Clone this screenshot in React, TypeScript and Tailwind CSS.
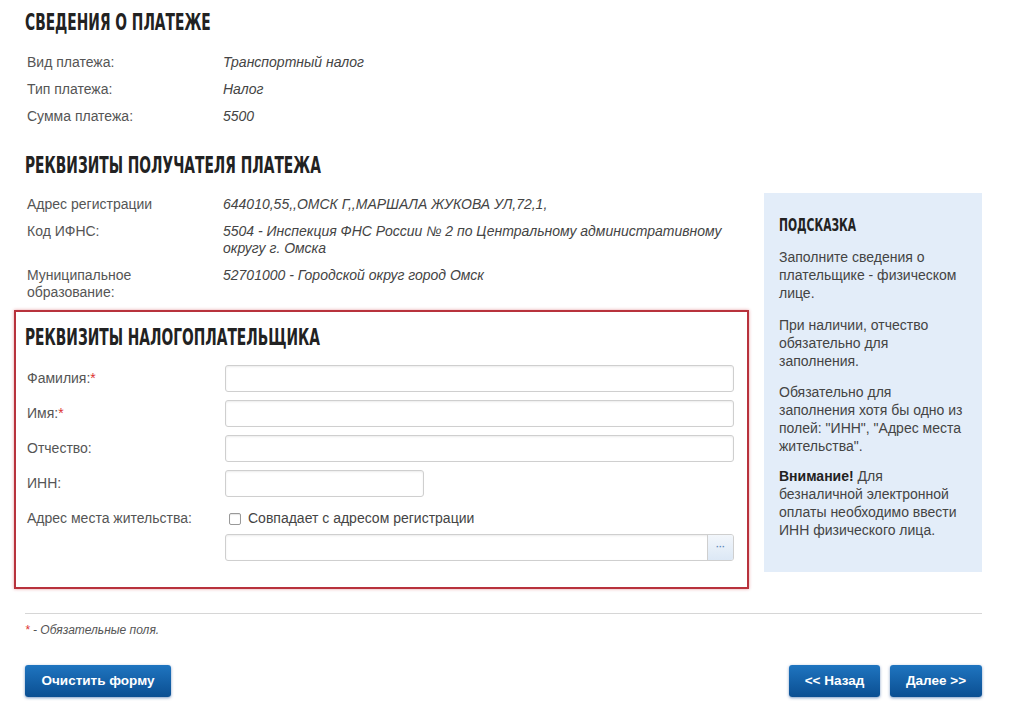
import React from "react";

const body = { fontFamily: '"Liberation Sans", Arial, sans-serif' };
const head = {
  fontFamily: '"DejaVu Sans Condensed", "Liberation Sans Narrow", "Liberation Sans", sans-serif',
};

function Heading({ children, small }: { children: React.ReactNode; small?: boolean }) {
  return (
    <h2
      style={head}
      className={
        small
          ? "origin-left scale-x-[0.7] whitespace-nowrap text-[17px] font-bold leading-none text-[#222]"
          : "origin-left scale-x-[0.667] whitespace-nowrap text-[23px] font-bold leading-none text-[#222]"
      }
    >
      {children}
    </h2>
  );
}

function InfoRow({ label, value }: { label: React.ReactNode; value: React.ReactNode }) {
  return (
    <div className="flex text-[14px] leading-[17px]">
      <div className="w-[198px] shrink-0 pl-[2px] text-[#555]">{label}</div>
      <div className="flex-1 italic text-[#444]">{value}</div>
    </div>
  );
}

function Field({ label, narrow }: { label: React.ReactNode; narrow?: boolean }) {
  return (
    <div className="flex items-center">
      <div className="w-[200px] shrink-0 pl-[2px] text-[14px] text-[#555]">{label}</div>
      <input
        type="text"
        className={
          narrow
            ? "h-[27px] w-[199px] rounded-[3px] border border-[#cfcfcf] bg-white shadow-[inset_0_1px_2px_rgba(0,0,0,0.08)] outline-none"
            : "h-[27px] flex-1 rounded-[3px] border border-[#cfcfcf] bg-white shadow-[inset_0_1px_2px_rgba(0,0,0,0.08)] outline-none"
        }
      />
    </div>
  );
}

function Req() {
  return <span className="text-[#d33]">*</span>;
}

export default function App() {
  return (
    <div style={body} className="h-[711px] w-[1024px] overflow-hidden bg-white pl-[25px] pr-[42px] pt-[11px]">
      <Heading>СВЕДЕНИЯ О ПЛАТЕЖЕ</Heading>
      <div className="mt-[20px] flex flex-col gap-[10px]">
        <InfoRow label="Вид платежа:" value="Транспортный налог" />
        <InfoRow label="Тип платежа:" value="Налог" />
        <InfoRow label="Сумма платежа:" value="5500" />
      </div>

      <div className="mt-[29px]">
        <Heading>РЕКВИЗИТЫ ПОЛУЧАТЕЛЯ ПЛАТЕЖА</Heading>
      </div>

      <div className="mt-[18px] flex gap-[29px]">
        <div className="w-[710px] shrink-0">
          <div className="mt-[1px] flex flex-col gap-[10px]">
            <InfoRow label="Адрес регистрации" value="644010,55,,ОМСК Г,,МАРШАЛА ЖУКОВА УЛ,72,1," />
            <InfoRow
              label="Код ИФНС:"
              value={
                <>
                  5504 - Инспекция ФНС России № 2 по Центральному административному
                  <br />
                  округу г. Омска
                </>
              }
            />
            <InfoRow
              label={
                <>
                  Муниципальное
                  <br />
                  образование:
                </>
              }
              value="52701000 - Городской округ город Омск"
            />
          </div>

          <div className="-ml-[11px] mt-[9px] w-[735px] border-2 border-[#b8323c] px-[9px] pb-[26px] pt-[14px] shadow-[0_0_3px_rgba(200,40,50,0.45)]">
            <Heading>РЕКВИЗИТЫ НАЛОГОПЛАТЕЛЬЩИКА</Heading>
            <div className="mt-[16px] flex flex-col gap-[8px] pr-[4px]">
              <Field label={<>Фамилия:<Req /></>} />
              <Field label={<>Имя:<Req /></>} />
              <Field label="Отчество:" />
              <Field label="ИНН:" narrow />
              <div className="mt-[3px] flex items-center">
                <div className="w-[200px] shrink-0 pl-[2px] text-[14px] text-[#555]">Адрес места жительства:</div>
                <label className="flex items-center gap-[7px] pl-[4px] text-[14px] text-[#444]">
                  <span className="h-[12px] w-[12px] rounded-[2px] border border-[#999] bg-white shadow-[inset_0_1px_1px_rgba(0,0,0,0.1)]" />
                  Совпадает с адресом регистрации
                </label>
              </div>
              <div className="-mt-[3px] flex pl-[200px]">
                <div className="flex h-[27px] flex-1 overflow-hidden rounded-[3px] border border-[#cfcfcf] bg-white shadow-[inset_0_1px_2px_rgba(0,0,0,0.08)]">
                  <div className="flex-1" />
                  <button className="flex w-[26px] items-center justify-center border-l border-[#cfcfcf] bg-gradient-to-b from-[#f2f6fb] to-[#dce8f5] text-[9px] font-bold leading-none text-[#5a86b8]">
                    ···
                  </button>
                </div>
              </div>
            </div>
          </div>
        </div>

        <aside className="mt-[-2px] h-[379px] w-[218px] shrink-0 whitespace-nowrap bg-[#e3edf9] px-[15px] pt-[24px] text-[14px] leading-[18px] text-[#444]">
          <Heading small>ПОДСКАЗКА</Heading>
          <p className="mt-[14px]">
            Заполните сведения о<br />
            плательщике - физическом<br />
            лице.
          </p>
          <p className="mt-[14px]">
            При наличии, отчество<br />
            обязательно для<br />
            заполнения.
          </p>
          <p className="mt-[13px]">
            Обязательно для<br />
            заполнения хотя бы одно из<br />
            полей: "ИНН", "Адрес места<br />
            жительства".
          </p>
          <p className="mt-[12px]">
            <b className="text-[#222]">Внимание!</b> Для<br />
            безналичной электронной<br />
            оплаты необходимо ввести<br />
            ИНН физического лица.
          </p>
        </aside>
      </div>

      <div className="mt-[24px] border-t border-[#d6d6d6]" />
      <p className="mt-[7px] text-[12px] italic text-[#555]">
        <Req /> - Обязательные поля.
      </p>

      <div className="mt-[26px] flex items-center justify-between">
        <BlueButton className="w-[146px]">Очистить форму</BlueButton>
        <div className="flex gap-[10px]">
          <BlueButton className="w-[91px]">&lt;&lt; Назад</BlueButton>
          <BlueButton className="w-[92px]">Далее &gt;&gt;</BlueButton>
        </div>
      </div>
    </div>
  );
}

function BlueButton({ children, className }: { children: React.ReactNode; className: string }) {
  return (
    <button
      className={
        "h-[32px] rounded-[3px] bg-gradient-to-b from-[#1f75c0] to-[#0b4f92] text-[13.5px] font-bold text-white shadow-[0_1px_3px_rgba(0,60,140,0.5)] " +
        className
      }
    >
      {children}
    </button>
  );
}
